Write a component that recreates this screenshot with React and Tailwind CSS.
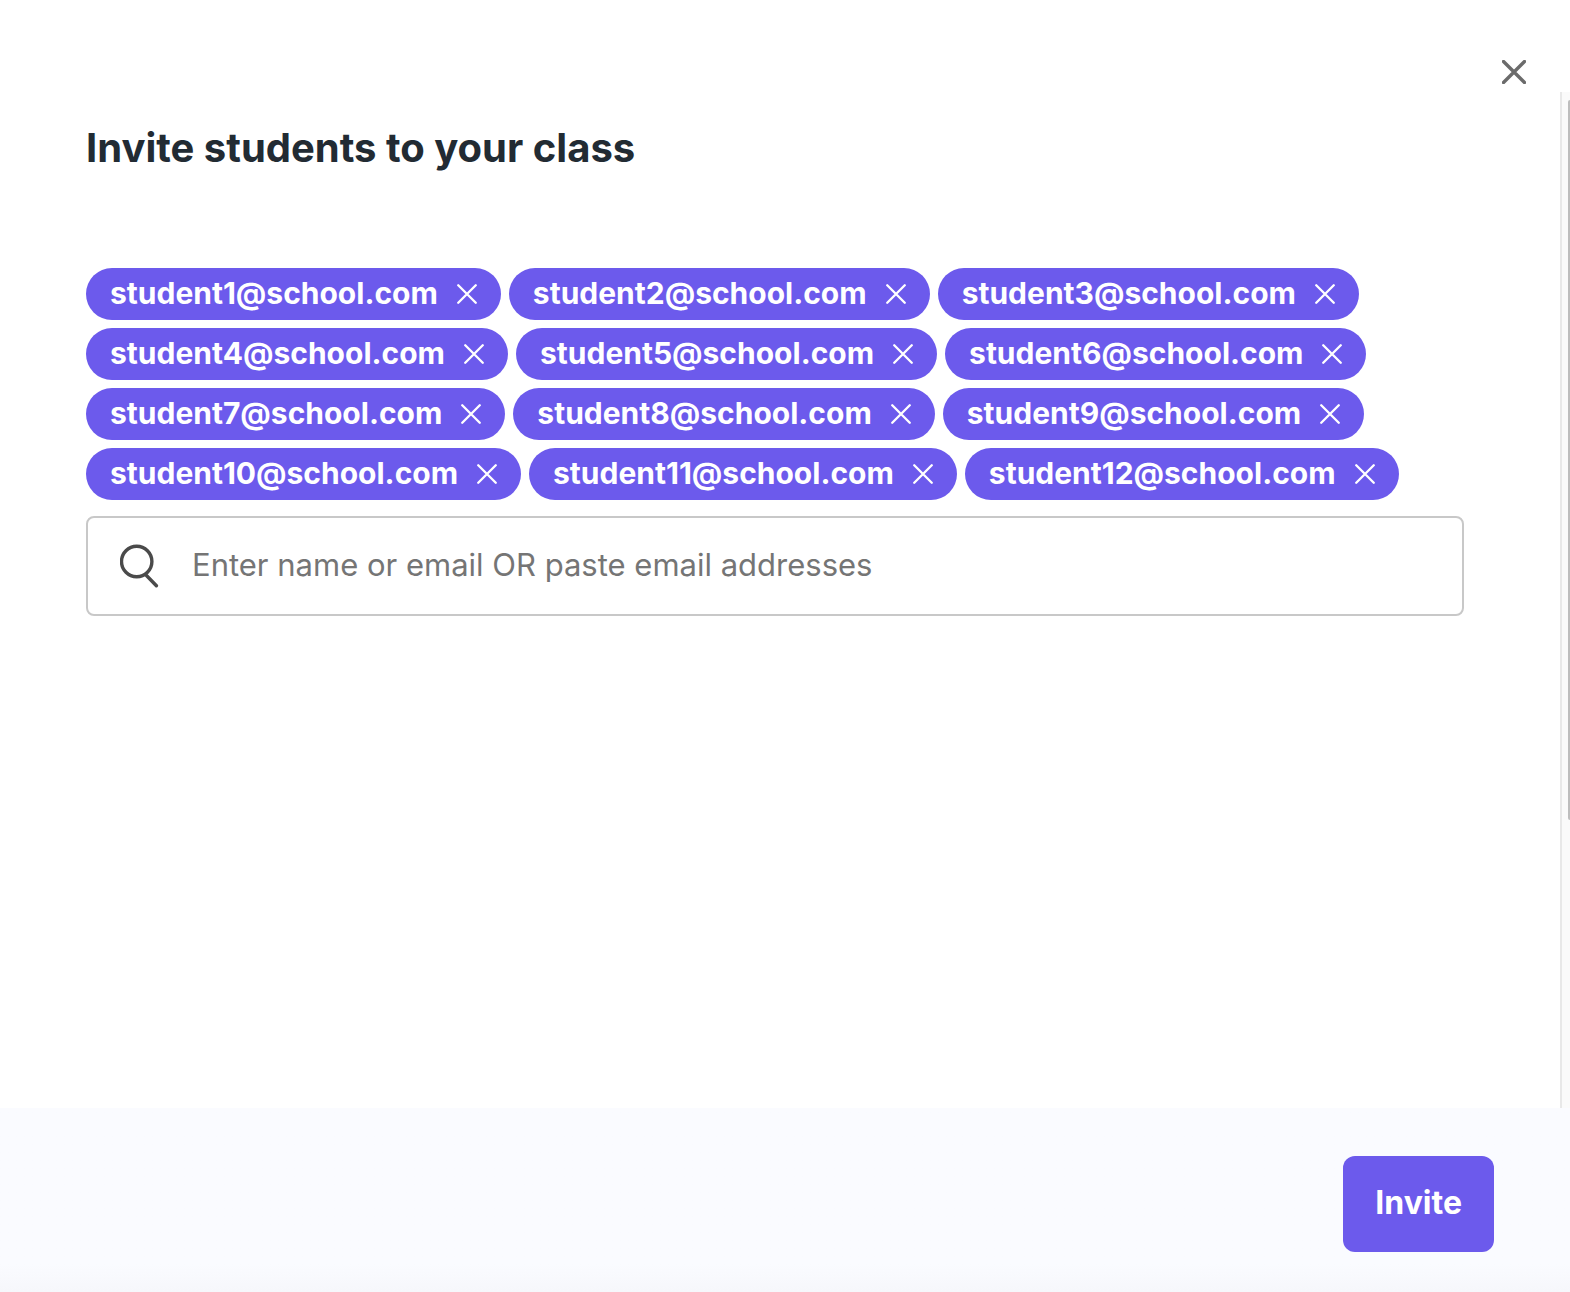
import React, { useState } from "react";

function Cross({ className, strokeWidth }) {
  return (
    <svg viewBox="0 0 24 24" fill="none" stroke="currentColor" strokeWidth={strokeWidth} strokeLinecap="round" className={className} aria-hidden="true">
      <path d="M1.5 1.5 22.5 22.5M22.5 1.5 1.5 22.5" />
    </svg>
  );
}

function Chip({ email, onRemove }) {
  return (
    <li className="flex h-[52px] items-center gap-[19px] rounded-full bg-[#6c5aec] px-6 text-white">
      <span className="pb-0.5 text-[30px] leading-10 font-bold">{email}</span>
      <button type="button" aria-label={`Remove ${email}`} onClick={onRemove}>
        <Cross className="size-5" strokeWidth={2.8} />
      </button>
    </li>
  );
}

const students = Array.from({ length: 12 }, (_, i) => `student${i + 1}@school.com`);

export default function App() {
  const [emails, setEmails] = useState(students);
  return (
    <div className="flex min-h-screen flex-col bg-white font-['Inter','Liberation_Sans',sans-serif]">
      <header className="flex h-[92px] shrink-0 items-end justify-end pr-11 pb-2">
        <button type="button" aria-label="Close" className="text-[#6b6b6b]">
          <Cross className="size-6" strokeWidth={3.4} />
        </button>
      </header>
      <div className="flex grow">
        <main className="grow pt-7 pr-24 pl-[86px]">
          <h1 className="text-[40px] leading-14 font-bold text-[#222b33]">Invite students to your class</h1>
          <ul className="mt-[92px] flex flex-wrap gap-2">
            {emails.map((email) => (
              <Chip key={email} email={email} onRemove={() => setEmails(emails.filter((e) => e !== email))} />
            ))}
          </ul>
          <label className="mt-4 flex h-25 items-center gap-8 rounded-lg border-2 border-[#c8c8c8] px-8">
            <svg viewBox="0 0 40 44" fill="none" stroke="#4a4a4a" strokeWidth="3.4" strokeLinecap="round" className="h-11 w-10 shrink-0" aria-hidden="true">
              <circle cx="16.7" cy="17.5" r="15.2" />
              <path d="M26 31 36.4 41.8" />
            </svg>
            <input
              type="text"
              aria-label="Name or email"
              placeholder="Enter name or email OR paste email addresses"
              className="h-full min-w-0 grow pb-1 text-[31px] outline-none placeholder:text-[#757575]"
            />
          </label>
        </main>
        <div className="flex w-2.5 shrink-0 justify-end border-l-2 border-[#e8e8e8] bg-[#fafafa] pt-2">
          <div className="h-[720px] w-0.5 rounded-l-full bg-[#bdbdbd]" />
        </div>
      </div>
      <footer className="flex h-[184px] shrink-0 items-center justify-end bg-linear-to-b from-[#fafbff] from-85% to-[#f6f7fb] pr-19 pb-2 pt-4">
        <button type="button" className="h-24 rounded-xl bg-[#6c5aec] px-8 pb-0.5 text-[32px] font-bold text-white">
          Invite
        </button>
      </footer>
    </div>
  );
}
